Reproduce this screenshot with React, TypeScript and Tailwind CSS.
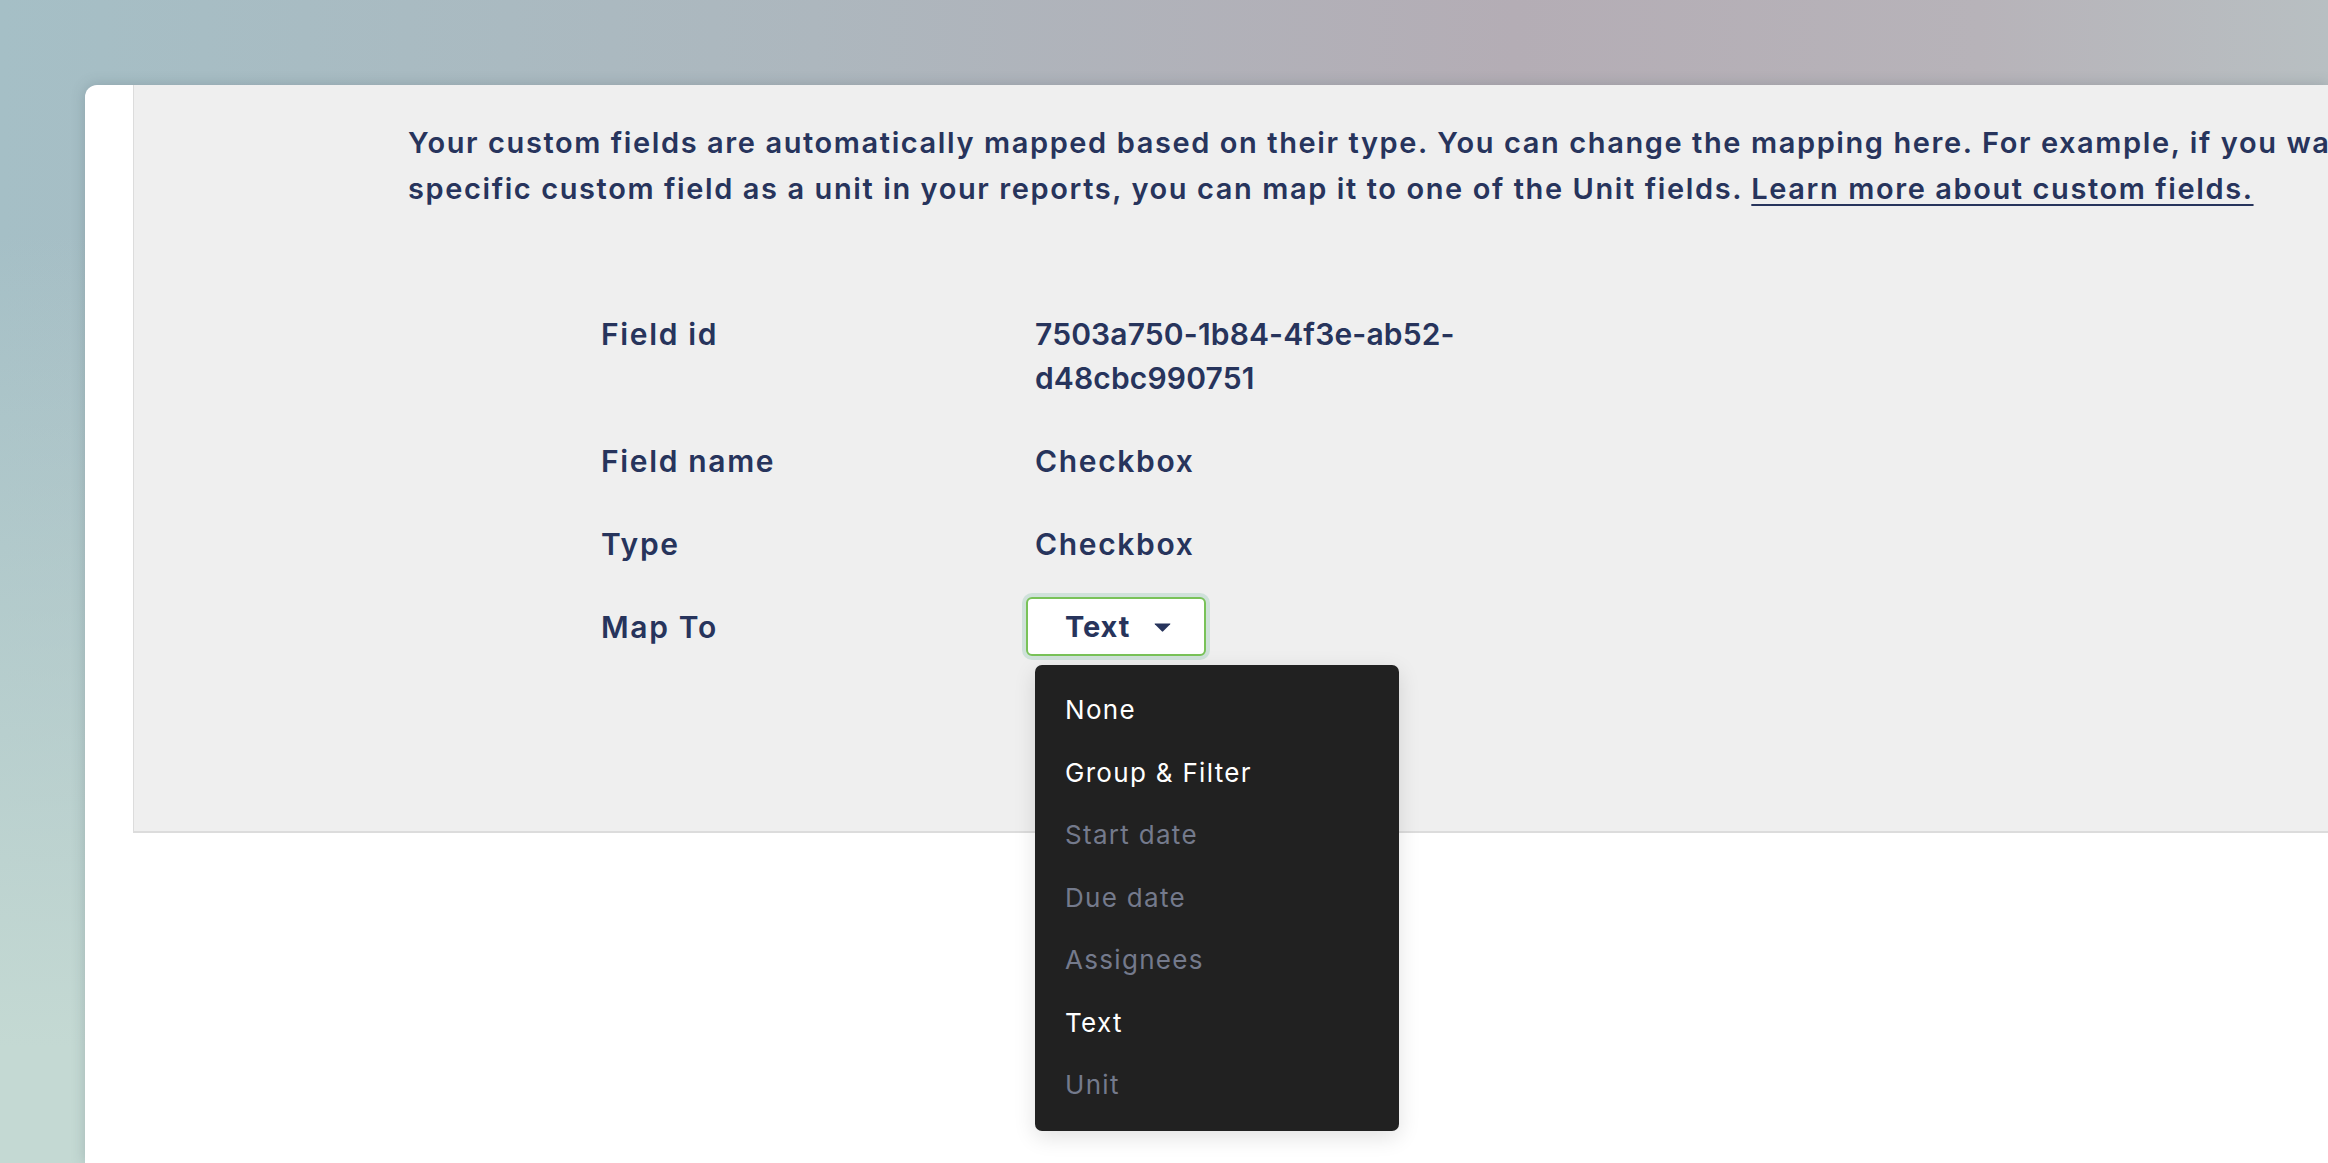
import React from "react";

const navy = "text-[#27345c]";

const options = [
  { label: "None", enabled: true },
  { label: "Group & Filter", enabled: true },
  { label: "Start date", enabled: false },
  { label: "Due date", enabled: false },
  { label: "Assignees", enabled: false },
  { label: "Text", enabled: true },
  { label: "Unit", enabled: false },
];

function Caret() {
  return (
    <svg width="17" height="9" viewBox="0 0 17 9" className="fill-[#27345c]">
      <path d="M1 0.5 H16 Q16.8 0.5 16.2 1.2 L9.2 8.3 Q8.5 9 7.8 8.3 L0.8 1.2 Q0.2 0.5 1 0.5 Z" />
    </svg>
  );
}

function MapToSelect() {
  return (
    <div className="relative -ml-[9px]">
      <button className="flex h-[59px] w-[180px] items-center rounded-[6px] border-2 border-[#79c258] bg-white pl-[37px] ring-[4px] ring-[#cfe1da]">
        <span className={`text-[29px] font-bold leading-none tracking-[0.03em] ${navy}`}>Text</span>
        <span className="ml-[24px] mt-[2px]">
          <Caret />
        </span>
      </button>

      {/* open menu */}
      <div className="absolute left-[9px] top-[68px] z-10 w-[364px] rounded-[7px] bg-[#212121] py-[14px] pl-[30px] font-normal shadow-[0_6px_22px_rgba(0,0,0,0.12)]">
        {options.map((o) => (
          <div
            key={o.label}
            className={`h-[62.5px] text-[26px] leading-[62.5px] tracking-[0.05em] ${o.enabled ? "text-white" : "text-[#747a8c]"}`}
          >
            {o.label}
          </div>
        ))}
      </div>
    </div>
  );
}

function Row({ label, children, className = "" }: { label: string; children: React.ReactNode; className?: string }) {
  return (
    <div className={`grid grid-cols-[434px_auto] ${className}`}>
      <div className="leading-[44px]">{label}</div>
      <div className="leading-[44px]">{children}</div>
    </div>
  );
}

export default function App() {
  return (
    <div className="h-[1163px] w-full overflow-hidden bg-[linear-gradient(to_bottom,rgba(196,217,211,0)_20%,#c4d9d3_90%),linear-gradient(to_right,#a5bfc6_0%,#adb7be_35%,#b4adb5_65%,#b7b3b9_85%,#b8bfc2_100%)] font-['Inter',sans-serif]">
      <div className="ml-[85px] mt-[85px] h-[1078px] rounded-tl-[12px] bg-white pl-[48px] shadow-[0_0_14px_rgba(60,80,90,0.25)]">
        <div className={`h-[748px] w-[2300px] border-b-2 border-l border-[#dcdcdc] bg-[#efefef] pl-[274px] pt-[35px] font-semibold ${navy}`}>
          <p className="whitespace-nowrap text-[29px] leading-[46px] tracking-[0.055em]">
            <span className="block">
              Your custom fields are automatically mapped based on their type. You can change the mapping here. For example, if you want to see a
            </span>
            <span className="block">
              specific custom field as a unit in your reports, you can map it to one of the Unit fields.{" "}
              <a href="#" className="underline decoration-2 underline-offset-[5px]">
                Learn more about custom fields.
              </a>
            </span>
          </p>

          <div className="ml-[193px] mt-[100px] text-[30px] tracking-[0.055em]">
            <Row label="Field id">
              <span className="block tracking-[0.005em]">7503a750-1b84-4f3e-ab52-</span>
              <span className="block tracking-[0.005em]">d48cbc990751</span>
            </Row>
            <Row label="Field name" className="mt-[39px]">
              Checkbox
            </Row>
            <Row label="Type" className="mt-[39px]">
              Checkbox
            </Row>
            <div className="mt-[31px] grid grid-cols-[434px_auto] items-center">
              <div className="leading-[44px]">Map To</div>
              <MapToSelect />
            </div>
          </div>
        </div>
      </div>
    </div>
  );
}
